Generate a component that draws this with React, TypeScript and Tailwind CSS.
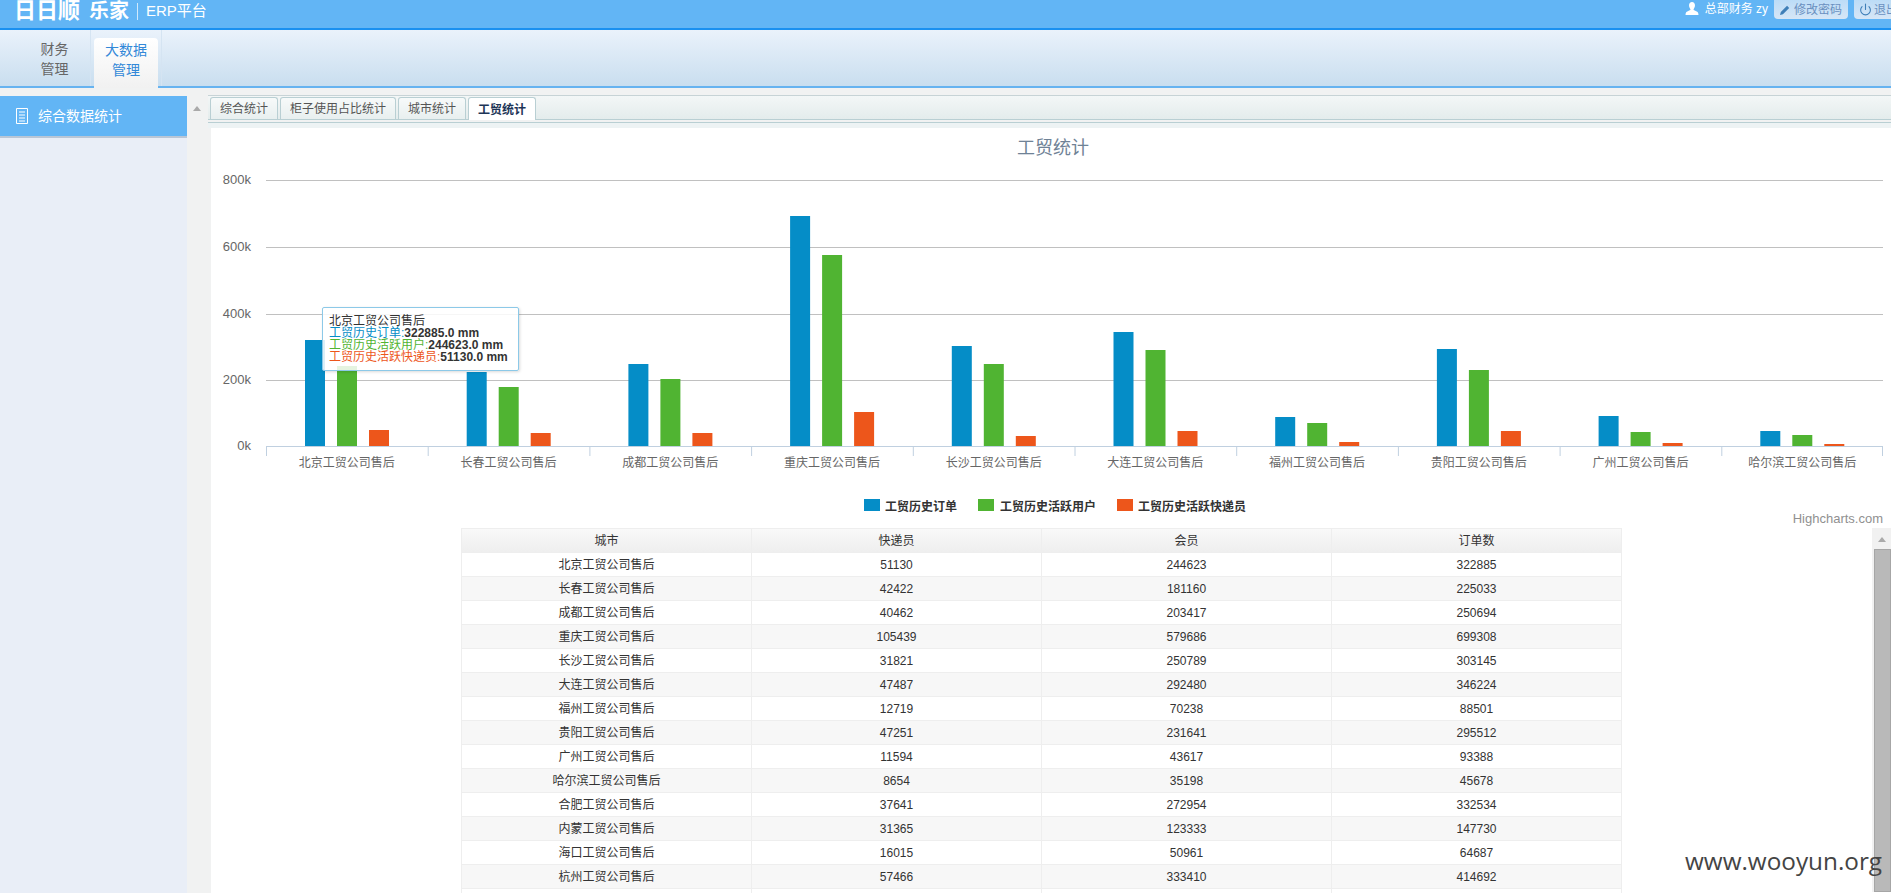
import { Power } from "lucide-react"

const rows = [
  ["北京工贸公司售后", 51130, 244623, 322885],
  ["长春工贸公司售后", 42422, 181160, 225033],
  ["成都工贸公司售后", 40462, 203417, 250694],
  ["重庆工贸公司售后", 105439, 579686, 699308],
  ["长沙工贸公司售后", 31821, 250789, 303145],
  ["大连工贸公司售后", 47487, 292480, 346224],
  ["福州工贸公司售后", 12719, 70238, 88501],
  ["贵阳工贸公司售后", 47251, 231641, 295512],
  ["广州工贸公司售后", 11594, 43617, 93388],
  ["哈尔滨工贸公司售后", 8654, 35198, 45678],
  ["合肥工贸公司售后", 37641, 272954, 332534],
  ["内蒙工贸公司售后", 31365, 123333, 147730],
  ["海口工贸公司售后", 16015, 50961, 64687],
  ["杭州工贸公司售后", 57466, 333410, 414692],
] as const

const chartRows = rows.slice(0, 10)
const colors = { order: "#058dc7", user: "#50b432", courier: "#ed561b" }
const axisLeft = 266
const axisRight = 1883
const baseY = 447
const catWidth = (axisRight - axisLeft) / 10

function h(v: number) {
  return Math.floor((v * 66) / 200000)
}

function Chart() {
  return (
    <svg viewBox="211 129 1680 400" className="block w-[1680px] h-[400px]">
      <text x="1053" y="155" textAnchor="middle" fontSize="18" fill="#6f8296">工贸统计</text>
      {[
        ["800k", 181],
        ["600k", 248],
        ["400k", 315],
        ["200k", 381],
      ].map(([label, y]) => (
        <g key={label}>
          <line x1={axisLeft} x2={axisRight} y1={Number(y) + 0.5} y2={Number(y) + 0.5} stroke="#c0c0c0" />
          <text x="251" y={Number(y) + 4} textAnchor="end" fontSize="13" fill="#666">{label}</text>
        </g>
      ))}
      <text x="251" y={baseY + 4} textAnchor="end" fontSize="13" fill="#666">0k</text>
      <line x1={axisLeft} x2={axisRight} y1={baseY + 0.5} y2={baseY + 0.5} stroke="#c0d0e0" />
      {chartRows.map((r, i) => {
        const x = axisLeft + i * catWidth
        return (
          <g key={r[0]}>
            <line x1={x + 0.5} x2={x + 0.5} y1={baseY} y2={baseY + 10} stroke="#c0d0e0" />
            <rect x={x + 39} y={baseY - h(r[3])} width="20" height={h(r[3])} fill={colors.order} />
            <rect x={x + 71} y={baseY - h(r[2])} width="20" height={h(r[2])} fill={colors.user} />
            <rect x={x + 103} y={baseY - h(r[1])} width="20" height={h(r[1])} fill={colors.courier} />
            <text x={x + catWidth / 2} y={468} textAnchor="middle" fontSize="12" fill="#666">{r[0]}</text>
          </g>
        )
      })}
      <line x1={axisRight - 0.5} x2={axisRight - 0.5} y1={baseY} y2={baseY + 10} stroke="#c0d0e0" />
      <rect x="864" y="500" width="16" height="12" fill={colors.order} />
      <text x="885" y="512" fontSize="12" fontWeight="700" fill="#333">工贸历史订单</text>
      <rect x="978" y="500" width="16" height="12" fill={colors.user} />
      <text x="1000" y="512" fontSize="12" fontWeight="700" fill="#333">工贸历史活跃用户</text>
      <rect x="1117" y="500" width="16" height="12" fill={colors.courier} />
      <text x="1138" y="512" fontSize="12" fontWeight="700" fill="#333">工贸历史活跃快递员</text>
      <text x="1883" y="524" textAnchor="end" fontSize="13" fill="#909090">Highcharts.com</text>
    </svg>
  )
}

export default function App() {
  return (
    <div className="relative w-[1891px] h-[893px] overflow-hidden bg-white text-xs text-[#333] [font-family:'Liberation_Sans','Noto_Sans_CJK_SC',sans-serif]">
      {/* top bar */}
      <div className="flex h-[30px] items-start justify-between overflow-hidden border-b-[2px] border-[#1a90f0] bg-[#62b5f5] text-white">
        <div className="flex h-[22px] items-center pl-[14px]">
          <span className="text-[22px] font-bold leading-[22px]">日日顺</span>
          <span className="ml-[9px] text-[20px] font-bold leading-[22px]">乐家</span>
          <span className="ml-[8px] h-[17px] w-px bg-white/70"></span>
          <span className="ml-[8px] text-[15px] leading-[22px]">ERP平台</span>
        </div>
        <div className="-mr-[13px] flex items-start">
          <svg viewBox="0 0 14 14" className="mt-[2px] h-[13px] w-[14px]" fill="#fff">
            <path d="M7 0c2 0 3.2 1.5 3.2 3.6S9 7.4 8.6 8.2c.2.8 1 1 2.4 1.6 1.5.6 3 1.1 3 4.2H0c0-3.100 1.500-3.600 3-4.200 1.400-.6 2.200-.8 2.400-1.600C5 7.400 3.800 5.700 3.800 3.600S5 0 7 0z" />
          </svg>
          <span className="ml-[6px] mt-[1px] text-[12px] leading-[16px]">总部财务 zy</span>
          <button className="ml-[6px] flex h-[19px] w-[74px] items-center rounded-b-[4px] bg-gradient-to-b from-[#bcdcf7] to-[#d6e6f6] pl-[6px] text-[12px] text-[#6a90c0]">
            <svg viewBox="0 0 12 12" className="h-[10px] w-[10px]" fill="#3f7fb8">
              <path d="M0 12l1-3.500L8.500 1 11 3.500 3.500 11z" />
            </svg>
            <span className="ml-[4px]">修改密码</span>
          </button>
          <button className="ml-[6px] flex h-[19px] w-[50px] items-center rounded-b-[4px] bg-gradient-to-b from-[#bcdcf7] to-[#d6e6f6] pl-[5px] text-[12px] text-[#6a90c0] whitespace-nowrap">
            <Power size={13} color="#3f7fb8" />
            <span className="ml-[2px]">退出</span>
          </button>
        </div>
      </div>

      {/* module nav */}
      <div className="flex h-[58px] border-b-[2px] border-[#66b3f0] bg-gradient-to-b from-[#eaf2fb] to-[#c9deef] text-[14px] leading-[20px]">
        <div className="flex w-[91px] flex-col items-center justify-center border-r border-[#d5e4f2] pl-[19px] pt-[2px] text-[#666]">
          <span>财务</span>
          <span>管理</span>
        </div>
        <div className="mb-[-2px] ml-[3px] flex h-[50px] w-[64px] flex-col items-center justify-center self-end rounded-t-[4px] bg-gradient-to-b from-white to-[#f1f1f1] pb-[7px] text-[#3288d8]">
          <span>大数据</span>
          <span>管理</span>
        </div>
        <div className="ml-[3px] w-px bg-[#d5e4f2]"></div>
      </div>

      {/* body */}
      <div className="flex h-[805px] bg-[#f1f2f2]">
        <aside className="mt-[8px] w-[187px] bg-[#e9eef7]">
          <div className="flex h-[42px] items-center border-b-[2px] border-[#b9c6d6] bg-[#62b5f5] pl-[16px] text-[14px] text-white">
            <svg viewBox="0 0 12 16" className="h-[16px] w-[12px]" fill="none" stroke="#fff" strokeWidth="1">
              <path d="M.5.500h11v15H.5zM3 4h6M3 7h6M3 10h6M3 13h6" />
            </svg>
            <span className="ml-[10px]">综合数据统计</span>
          </div>
        </aside>
        <div className="w-[21px] pt-[18px] pl-[6px]">
          <div className="h-0 w-0 border-x-[4px] border-b-[5px] border-x-transparent border-b-[#aaa]"></div>
        </div>
        <main className="flex flex-1 flex-col">
          <div className="mt-[7px] h-[1px] bg-[#c7d3d6]"></div>
          <div className="flex h-[24px] items-end border-b border-[#b9cfd3] bg-gradient-to-b from-[#f3f7f7] to-[#e4ecec] pl-[2px] text-[#555]">
            {["综合统计", "柜子使用占比统计", "城市统计"].map((t) => (
              <div key={t} className="mr-[2px] flex h-[22px] items-center rounded-t-[3px] border border-b-0 border-[#b9cfd3] bg-gradient-to-b from-[#f7fafa] to-[#e8efef] px-[9px] pt-[1px]">
                {t}
              </div>
            ))}
            <div className="mb-[-1px] flex h-[23px] items-center rounded-t-[3px] border border-b-0 border-[#b9cfd3] bg-white px-[9px] pt-[1px] font-bold text-[#1d3557]">
              工贸统计
            </div>
          </div>
          <div className="mt-[2px] h-[6px] border-t border-[#b9cfd3] bg-[#edf3f4]"></div>

          <div className="relative ml-[3px] flex-1 overflow-hidden bg-white">
            <Chart />

            {/* tooltip */}
            <div className="absolute left-[111px] top-[179px] h-[64px] w-[197px] rounded-[2px] border border-[#8cc9e8] bg-white/85 px-[6px] pt-[7px] text-[12px] leading-[12px] shadow-[1px_1px_3px_rgba(0,0,0,0.15)]">
              <div>北京工贸公司售后</div>
              <div><span className="text-[#058dc7]">工贸历史订单:</span><b>322885.0 mm</b></div>
              <div><span className="text-[#50b432]">工贸历史活跃用户:</span><b>244623.0 mm</b></div>
              <div><span className="text-[#ed561b]">工贸历史活跃快递员:</span><b>51130.0 mm</b></div>
            </div>

            <div className="flex items-start">
              <table className="ml-[250px] w-[1161px] table-fixed border-collapse text-center text-[12px]">
                <thead>
                  <tr className="h-[24px] bg-gradient-to-b from-[#f9f9f9] to-[#eeeeee]">
                    {["城市", "快递员", "会员", "订单数"].map((t) => (
                      <th key={t} className="border border-[#eeeeee] font-normal">{t}</th>
                    ))}
                  </tr>
                </thead>
                <tbody>
                  {rows.map((r, i) => (
                    <tr key={r[0]} className={i % 2 ? "h-[24px] bg-[#f7f7f7]" : "h-[24px] bg-white"}>
                      {r.map((c, j) => (
                        <td key={j} className="border border-[#eeeeee]">{c}</td>
                      ))}
                    </tr>
                  ))}
                  <tr className="h-[24px] bg-white">
                    {[0, 1, 2, 3].map((j) => (
                      <td key={j} className="border border-[#eeeeee]"></td>
                    ))}
                  </tr>
                </tbody>
              </table>
              <div className="ml-auto flex h-[364px] w-[19px] flex-col items-end bg-[#f1f1f1]">
                <div className="mr-[5px] mt-[9px] h-0 w-0 border-x-[4px] border-b-[5px] border-x-transparent border-b-[#aaa]"></div>
                <div className="mt-[7px] w-[17px] flex-1 border border-[#a6a6a6] bg-[#b9b9b9]"></div>
              </div>
            </div>
          </div>
        </main>
      </div>

      <div className="absolute left-[1685px] top-[846px] text-[24.3px] leading-[30px] text-[#444] [font-family:'Open_Sans',sans-serif]">
        www.wooyun.org
      </div>
    </div>
  )
}
